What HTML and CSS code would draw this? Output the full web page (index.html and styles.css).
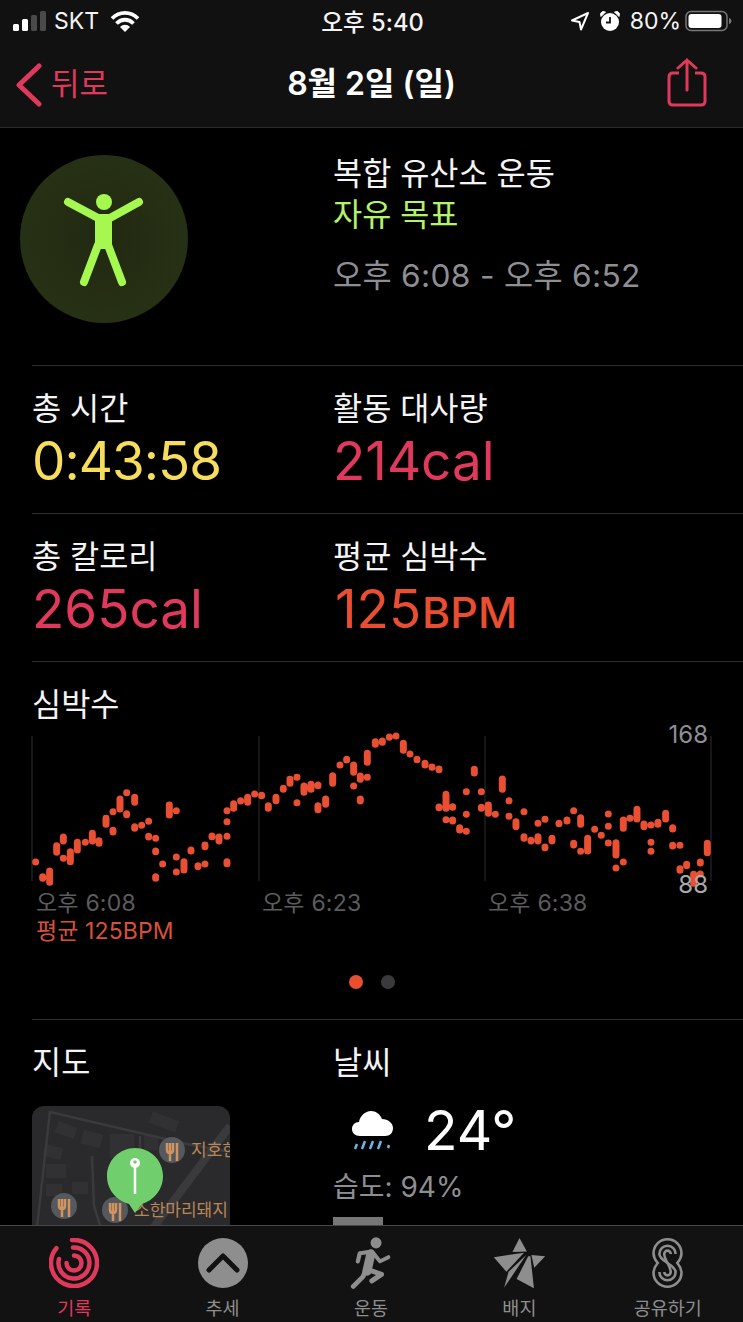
FILE: index.html
```html
<!DOCTYPE html>
<html lang="ko">
<head>
<meta charset="UTF-8">
<title>8월 2일 (일)</title>
<link rel="stylesheet" href="styles.css">
</head>
<body>
<div class="phone">
    <header class="top-bar">
        <div class="status">
            <div class="status-left">
                <svg class="signal" viewBox="0 0 33 20" width="33" height="20">
                    <rect x="0" y="13" width="6" height="7" rx="1.500" fill="#fff"/>
                    <rect x="9" y="8" width="6" height="12" rx="1.500" fill="#fff"/>
                    <rect x="18" y="4" width="6" height="16" rx="1.500" fill="#4a4a4a"/>
                    <rect x="27" y="0" width="6" height="20" rx="1.500" fill="#4a4a4a"/>
                </svg>
                <span class="carrier">SKT</span>
                <svg class="wifi" viewBox="0 0 30 22" width="30" height="22">
                    <path d="M2 8.500C9.500 1 20.500 1 28 8.500M6.500 13.500C11.500 8.500 18.500 8.500 23.500 13.500" fill="none" stroke="#fff" stroke-width="3.800"/>
                    <path d="M10 17C13 14 17 14 20 17L15 22Z" fill="#fff"/>
                </svg>
            </div>
            <span class="clock">오후 5:40</span>
            <div class="status-right">
                <svg viewBox="0 0 20 20" width="20" height="20">
                    <path d="M18 2 2 9.500l7.500 1.500L11 18.500Z" fill="none" stroke="#fff" stroke-width="2" stroke-linejoin="round"/>
                </svg>
                <svg class="alarm" viewBox="0 0 22 22" width="22" height="22">
                    <circle cx="11" cy="12" r="9" fill="#fff"/>
                    <path d="M11 7v5.500H7" fill="none" stroke="#111" stroke-width="1.800"/>
                    <path d="M2 6.500 6.500 2 3.500 1.500 1.500 3.500ZM20 6.500 15.500 2l3-.5 2 2Z" fill="#fff" stroke="#fff"/>
                </svg>
                <span class="percent">80%</span>
                <svg viewBox="0 0 47 22" width="47" height="22">
                    <rect x="1" y="1.500" width="41" height="19" rx="5" fill="none" stroke="#777" stroke-width="1.500"/>
                    <rect x="3.500" y="4" width="33" height="14" rx="3" fill="#fff"/>
                    <path d="M44 8v6c1.500-.5 2.500-1.500 2.500-3S45.500 8.500 44 8Z" fill="#777"/>
                </svg>
            </div>
        </div>
        <nav class="nav">
            <a class="back">
                <svg viewBox="0 0 28 44" width="28" height="44">
                    <path d="M24 3 4 22l20 19" fill="none" stroke="#e0395c" stroke-width="5" stroke-linecap="round" stroke-linejoin="round"/>
                </svg>
                <span>뒤로</span>
            </a>
            <h1 class="nav-title">8월 2일 (일)</h1>
            <svg class="share" viewBox="0 0 42 50" width="42" height="50">
                <path d="M13 15H7c-2.500 0-4 1.500-4 4v24c0 2.500 1.500 4 4 4h28c2.500 0 4-1.500 4-4V19c0-2.500-1.500-4-4-4h-6" fill="none" stroke="#e0395c" stroke-width="3"/>
                <path d="M21 32V2M12 10l9-8 9 8" fill="none" stroke="#e0395c" stroke-width="3" stroke-linecap="round"/>
            </svg>
        </nav>
    </header>

    <main class="content">
        <section class="summary">
            <div class="badge">
                <svg viewBox="0 0 168 168" width="168" height="168">
                    <circle cx="84" cy="47" r="8" fill="#a6f851"/>
                    <path d="M48 47 78 63H90L119 47" fill="none" stroke="#a6f851" stroke-width="8" stroke-linecap="round" stroke-linejoin="round"/>
                    <path d="M75 62H92V94H75Z" fill="#a6f851"/>
                    <path d="M78 90 64 127M88 90 102 127" fill="none" stroke="#a6f851" stroke-width="8" stroke-linecap="round"/>
                </svg>
            </div>
            <div class="summary-info">
                <div>복합 유산소 운동</div>
                <div class="goal">자유 목표</div>
                <div class="time-range">오후 6:08 - 오후 6:52</div>
            </div>
        </section>

        <section class="stat-row">
            <div class="stat">
                <div class="label">총 시간</div>
                <div class="value yellow">0:43:58</div>
            </div>
            <div class="stat">
                <div class="label">활동 대사량</div>
                <div class="value pink">214cal</div>
            </div>
        </section>
        <section class="stat-row">
            <div class="stat">
                <div class="label">총 칼로리</div>
                <div class="value pink">265cal</div>
            </div>
            <div class="stat">
                <div class="label">평균 심박수</div>
                <div class="value orange">125<small>BPM</small></div>
            </div>
        </section>

        <section class="heart">
            <div class="label">심박수</div>
            <div class="chart">
                <svg viewBox="0 725 743 164" width="743" height="164">
                    <path d="M32 736V881M259 736V881M485 736V881M711 736V881" stroke="#2e2e30" stroke-width="1"/>
                    <g fill="none" stroke="#e94f33" stroke-width="21" stroke-linecap="round">
                        <path transform="translate(20 725) scale(.3333)" d="M47 411h0M68 455V460M89 438V472M110 362V382M130 336V348M130 400h0M151 380V410M172 352V375M196 352h0M217 325V348M237 347V355M258 280V298M279 260h0M279 316V321M300 222V252M320 203h0M320 266V269M344 217V232M344 305V310M365 301h0M386 289h0M386 334V336M407 340h0M407 378V380M407 455V460M428 417h0M448 240V270M469 257h0M469 396h0M469 441h0M492 410V435M513 375V378M534 422V425M555 417h0M555 360V365M576 333V335M597 336V348M621 257h0M621 290h0M621 334h0M621 410V416M641 236V250M662 227V228M683 217V232M704 207h0M725 211V212M745 242V250M768 217V227M790 190V193M810 163V175M831 157h0M831 233h0M852 183V202M873 178V193M894 180V182M894 242V254M917 222V238M938 152V175M960 120h0M980 103V105M1001 120V142M1001 183h0M1021 153V163M1021 222V228M1042 85V112M1042 157h0"/>
                        <path transform="translate(360 725) scale(.3333)" d="M46 50V58M67 48V52M88 36V37M108 33h0M130 55V76M150 87h0M171 103V104M195 115V120M216 126V127M237 132V134M237 246V248M258 208V250M258 284h0M278 245V247M278 285V288M299 308V315M319 200h0M319 268h0M319 319h0M343 133V144M364 200h0M364 247V250M385 240V265M406 268h0M427 162V193M447 227h0M447 274h0M468 290V305M492 260h0M492 335V340M513 346V348M534 335V348M534 295h0M555 283h0M555 366V368M576 340V348M597 295V296M621 285V288M641 257h0M641 355V360M662 278V298M662 379h0M683 340V378M704 313h0M724 331h0M745 267h0M745 304h0M745 354h0M768 353V390M768 429h0M790 285V310M790 411h0M810 280h0M831 253V282M852 297V305M873 300h0M873 352h0M873 379h0M894 292V298M917 265V282M938 308V312M938 361V363M960 361h0M960 431V436M980 418V422M1001 448V475M1021 411V414M1021 447h0M1042 355V383"/>
                    </g>
                </svg>
                <span class="chart-max">168</span>
                <span class="chart-min">88</span>
            </div>
            <div class="chart-times">
                <span>오후 6:08</span>
                <span>오후 6:23</span>
                <span>오후 6:38</span>
            </div>
            <div class="chart-avg">평균 125BPM</div>
            <div class="pager">
                <i class="on"></i>
                <i></i>
            </div>
        </section>

        <section class="bottom-row">
            <div class="stat">
                <div class="label">지도</div>
                <div class="map">
                    <svg viewBox="0 0 198 130" width="198" height="130">
                        <rect width="198" height="130" fill="#2a2a2c"/>
                        <g fill="#313133">
                            <rect x="24" y="18" width="20" height="12" transform="rotate(20 34 24)"/>
                            <rect x="50" y="26" width="20" height="14" transform="rotate(15 60 33)"/>
                            <rect x="12" y="40" width="18" height="12" transform="rotate(15 21 46)"/>
                            <rect x="14" y="58" width="20" height="14"/>
                            <rect x="14" y="78" width="16" height="12"/>
                            <rect x="78" y="28" width="24" height="24"/>
                            <rect x="118" y="10" width="28" height="12" transform="rotate(20 132 16)"/>
                            <rect x="40" y="76" width="16" height="12"/>
                            <rect x="112" y="30" width="14" height="14"/>
                        </g>
                        <g fill="none" stroke="#3a3a3d" stroke-width="2.500">
                            <path d="M18 5 4 130M18 6 155 38 198 46M108 30V50M60 50 62 100 70 125"/>
                            <path d="M198 20 115 130" stroke-width="8"/>
                        </g>
                        <g fill="#55585c">
                            <circle cx="140" cy="44" r="13"/>
                            <circle cx="32" cy="100" r="13"/>
                            <circle cx="83" cy="104" r="13"/>
                        </g>
                        <g fill="none" stroke="#d2945f" stroke-width="2.500">
                            <path d="M135 37v7q0 3 3 3t3-3V37M138 37V55M145 37V55"/>
                            <path d="M27 93v7q0 3 3 3t3-3V93M30 93V111M37 93V111"/>
                            <path d="M78 97v7q0 3 3 3t3-3V97M81 97V115M88 97V115"/>
                        </g>
                        <text class="map-text" x="159" y="50">지호한</text>
                        <text class="map-text" x="102" y="110">소한마리돼지</text>
                        <path d="M103 42c15 0 28 12 28 28 0 15-11 25-21 28l-7 9-6-9C86 95 75 85 75 70c0-16 13-28 28-28Z" fill="#70cf6c"/>
                        <path d="M103 60V88" stroke="#fff" stroke-width="2.500"/>
                        <circle cx="103" cy="57" r="5" fill="#fff"/>
                        <circle cx="103" cy="56" r="1.800" fill="#70cf6c"/>
                    </svg>
                </div>
            </div>
            <div class="stat">
                <div class="label">날씨</div>
                <div class="weather">
                    <svg viewBox="0 0 44 44" width="44" height="44">
                        <path d="M9 28C4 28 1 25 1 21c0-4 3-7 7-7 1-6 6-11 12-11 5 0 9 3 11 8 6 0 11 4 11 9s-3 8-8 8Z" fill="#fff"/>
                        <path d="M6 36 4 41M14 33l-3 8M22 33l-3 8M30 33l-3 8M38 37l-1 3" stroke="#6fb2e6" stroke-width="2.500" fill="none"/>
                    </svg>
                    <span class="temp">24°</span>
                </div>
                <div class="humidity">습도: 94%</div>
                <div class="uv-bar"></div>
            </div>
        </section>
    </main>

    <footer class="tabs">
        <div class="tab active">
            <svg class="round-icon" viewBox="0 0 50 50" width="50" height="50">
                <g fill="none" stroke="#e0395c" stroke-width="4.500" stroke-linecap="round">
                    <path d="M23 2.100A23 23 0 1 1 7.400 10.200"/>
                    <path d="M24 9.500A15.500 15.500 0 1 1 10 21"/>
                    <path d="M25 17.500A7.500 7.500 0 1 1 17.500 25"/>
                </g>
            </svg>
            <span>기록</span>
        </div>
        <div class="tab">
            <svg class="round-icon" viewBox="0 0 50 50" width="50" height="50">
                <circle cx="25" cy="25" r="25" fill="#8e8e8e"/>
                <path d="M11 32 25 18 39 32" fill="none" stroke="#121212" stroke-width="5" stroke-linecap="round" stroke-linejoin="round"/>
            </svg>
            <span>추세</span>
        </div>
        <div class="tab">
            <svg viewBox="55 10 135 160" width="44" height="52">
                <circle cx="138" cy="28" r="17" fill="#8e8e8e"/>
                <g fill="none" stroke="#8e8e8e" stroke-linecap="round" stroke-linejoin="round">
                    <path d="M122 62 110 115" stroke-width="28"/>
                    <path d="M125 55 88 60 82 85" stroke-width="13"/>
                    <path d="M130 60 150 85 176 72" stroke-width="12"/>
                    <path d="M118 112 155 125 125 145" stroke-width="15"/>
                    <path d="M105 115 98 132 68 162" stroke-width="15"/>
                </g>
            </svg>
            <span>운동</span>
        </div>
        <div class="tab">
            <svg viewBox="482 12 170 162" width="55" height="52">
                <g fill="#8e8e8e">
                    <path d="M567 15 590 57 545 59Z"/>
                    <path d="M487 75 581 61 526 120Z"/>
                    <path d="M588 68 519 170 533 120Z"/>
                    <path d="M594 72 558 143 612 172 601 72Z"/>
                    <path d="M604 68 647 72 613 108Z"/>
                </g>
            </svg>
            <span>배지</span>
        </div>
        <div class="tab">
            <svg viewBox="962 10 106 160" width="35" height="52">
                <g fill="none" stroke="#8e8e8e" stroke-width="8">
                    <path d="M972 60A43 43 0 0 1 1058 60C1058 76 1050 84 1045 90 1050 96 1058 104 1058 120A43 43 0 0 1 972 120C972 104 980 96 985 90 980 84 972 76 972 60Z"/>
                    <path d="M1040 62A25 25 0 0 0 990 62C990 85 1040 95 1040 118A25 25 0 0 1 990 118"/>
                    <path d="M1025 62A10 10 0 0 0 1005 62C1005 80 1025 100 1025 118A10 10 0 0 1 1005 118"/>
                </g>
            </svg>
            <span>공유하기</span>
        </div>
    </footer>
</div>
</body>
</html>
```

FILE: styles.css
```css
html, body {
    margin: 0;
    padding: 0;
    background-color: black;
}

body {
    font-family: Inter, "Noto Sans CJK KR", sans-serif;
    color: #f4f4f4;
}

.phone {
    width: 743px;
    height: 1322px;
    display: flex;
    flex-direction: column;
    overflow: hidden;
}

/* top bars */
.top-bar {
    background-color: #111;
    border-bottom: 1px solid #2a2a2c;
    height: 127px;
    flex: none;
}

.status {
    height: 42px;
    display: grid;
    grid-template-columns: 1fr auto 1fr;
    align-items: center;
    padding: 0 11px 0 13px;
    font-size: 23px;
}

.status-left {
    display: flex;
    align-items: center;
    gap: 8px;
}

.carrier {
    margin-right: 3px;
}

.clock {
    font-size: 23.7px;
    font-weight: 500;
}

.status-right {
    display: flex;
    align-items: center;
    justify-content: flex-end;
    gap: 9px;
}

.percent {
    margin-right: -5px;
}

.nav {
    height: 85px;
    display: grid;
    grid-template-columns: 1fr auto 1fr;
    align-items: center;
    padding: 0 35px;
}

.back {
    display: flex;
    align-items: center;
    gap: 8px;
    margin-left: -20px;
    color: #e0395c;
    font-size: 31px;
}

.back span {
    margin-bottom: 6px;
}

.nav-title {
    margin: 0 0 8px;
    font-size: 32px;
    font-weight: 600;
    color: #fff;
}

.share {
    justify-self: end;
    margin-bottom: 4px;
}

/* main column */
.content {
    flex: 1;
    overflow: hidden;
    font-size: 31.7px;
}

.summary {
    display: grid;
    grid-template-columns: 333px 1fr;
    height: 237px;
}

.badge {
    width: 168px;
    height: 168px;
    margin: 27px 0 0 20px;
    border-radius: 50%;
    background: radial-gradient(circle, #212a11 0%, #293316 100%);
}

.summary-info {
    padding-top: 25px;
    line-height: 41px;
}

.goal {
    color: #b3f26a;
}

.time-range {
    margin-top: 20px;
    color: #8e8e93;
    letter-spacing: .3px;
}

.stat-row {
    display: grid;
    grid-template-columns: 301px 1fr;
    height: 147px;
    margin-left: 32px;
    border-top: 1px solid #2e2e30;
}

.label {
    margin-top: 23px;
    line-height: 40px;
}

.value {
    margin-top: 2px;
    font-size: 53px;
    line-height: 60px;
}

.value small {
    margin-left: 1px;
    font-size: 43px;
    font-weight: 500;
}

.yellow {
    color: #f6dd5c;
    letter-spacing: -1px;
}

.pink { color: #e0395c; }

.orange {
    padding-left: 2px;
    color: #ea4e30;
}

/* heart rate chart */
.heart {
    margin-left: 32px;
    border-top: 1px solid #2e2e30;
    height: 357px;
}

.chart {
    position: relative;
    height: 164px;
    margin: 0 0 0 -32px;
}

.chart svg {
    display: block;
}

.chart-max, .chart-min {
    position: absolute;
    right: 35px;
    font-size: 24px;
    line-height: 28px;
    color: #8e8e93;
}

.chart-max { top: -4px; }
.chart-min { top: 146px; color: #aaa; }

.chart-times {
    display: grid;
    grid-template-columns: repeat(3, 226px);
    padding-left: 4px;
    font-size: 23px;
    line-height: 28px;
    letter-spacing: .2px;
    color: #5c5c5e;
}

.chart-avg {
    padding-left: 4px;
    font-size: 23px;
    line-height: 28px;
    letter-spacing: .1px;
    color: #d9503a;
}

.pager {
    display: flex;
    justify-content: center;
    gap: 18px;
    margin: 30px 0 0 -32px;
}

.pager i {
    width: 14px;
    height: 14px;
    border-radius: 50%;
    background-color: #3a3a3c;
}

.pager i.on {
    background-color: #ea4e30;
}

/* map + weather */
.bottom-row {
    display: grid;
    grid-template-columns: 301px 1fr;
    margin-left: 32px;
    border-top: 1px solid #2e2e30;
}

.map {
    width: 198px;
    height: 130px;
    margin-top: 23px;
    border-radius: 12px;
    overflow: hidden;
}

.map svg {
    display: block;
}

.map-text {
    font-size: 17px;
    fill: #b98659;
}

.weather {
    display: flex;
    align-items: center;
    gap: 29px;
    margin: 17px 0 0 18px;
    height: 60px;
}

.temp {
    font-size: 55px;
    color: #fff;
}

.humidity {
    margin-top: 7px;
    font-size: 28px;
    line-height: 40px;
    color: #8e8e93;
}

.uv-bar {
    width: 50px;
    height: 10px;
    margin-top: 10px;
    background-color: #777;
}

/* tab bar */
.tabs {
    flex: none;
    height: 96px;
    display: grid;
    grid-template-columns: repeat(5, 1fr);
    padding-right: 1px;
    background-color: #121212;
    border-top: 1px solid #48484a;
    position: relative;
    z-index: 2;
}

.tab {
    display: flex;
    flex-direction: column;
    align-items: center;
    padding-top: 11px;
    font-size: 18.5px;
    line-height: 24px;
    color: #8e8e8e;
}

.tab svg {
    display: block;
    margin-bottom: 7px;
}

.tab svg.round-icon {
    margin: 1px 0 8px;
}

.tab.active {
    color: #e0395c;
}
```
